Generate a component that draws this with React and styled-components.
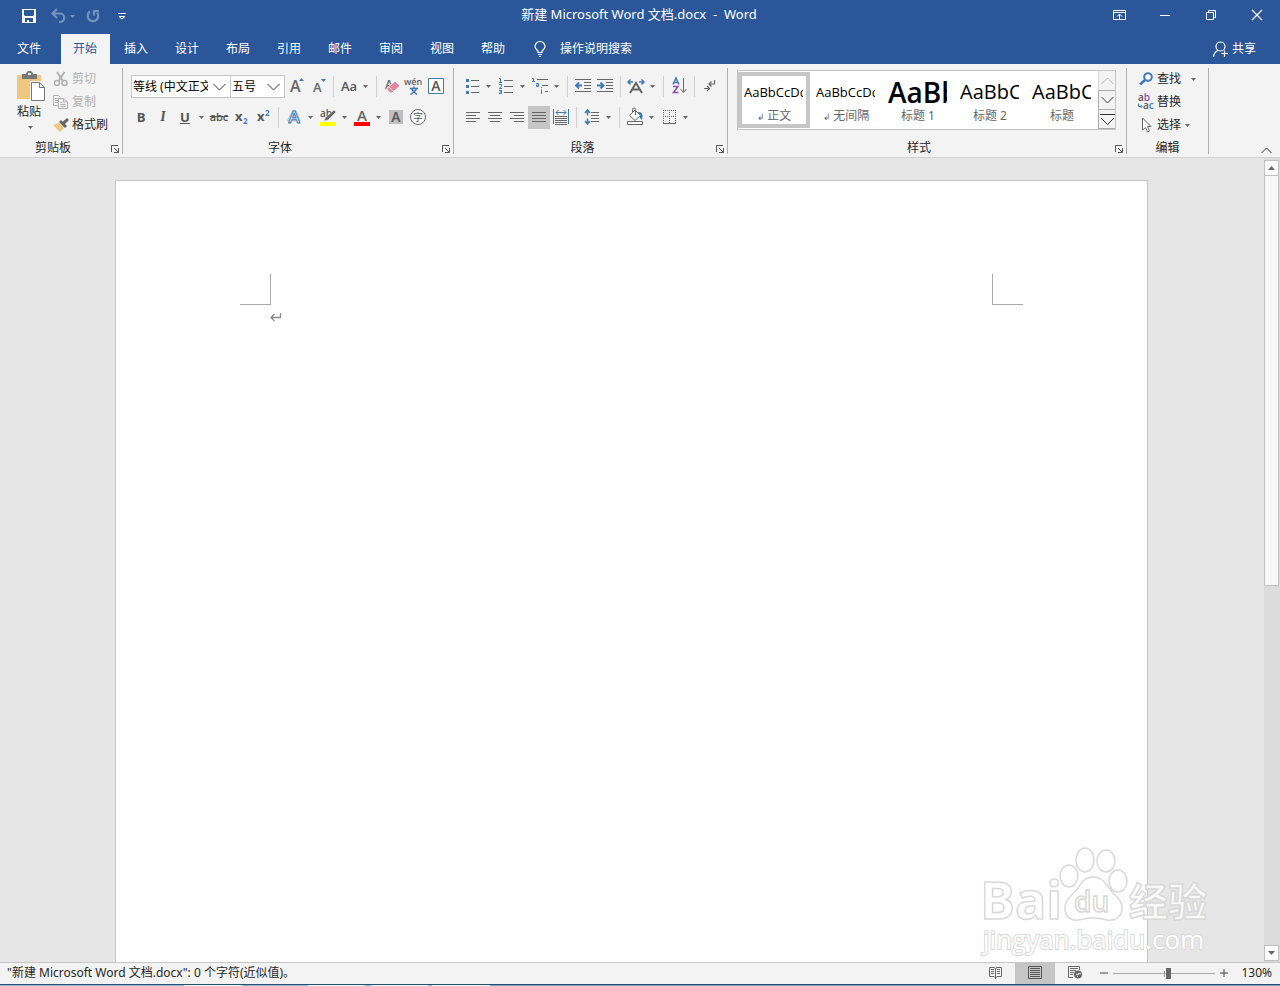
import React, { useState } from 'react';
import styled, { createGlobalStyle, ThemeProvider } from 'styled-components';

const theme = {
  color: {
    primary: '#2b579a',
    ribbon: '#f3f3f3',
    canvas: '#e6e6e6',
    line: '#c6c6c6',
    divider: '#b1b1b1',
    text: '#262626',
    icon: '#666666',
    blue: '#3f7ab5',
    disabled: '#b1b1b1',
  },
};

const GlobalStyle = createGlobalStyle`
  * { box-sizing: border-box; }
  body {
    margin: 0;
    font-family: "Noto Sans", "Noto Sans CJK SC", sans-serif;
    font-size: 12px;
    line-height: 16px;
    color: #262626;
  }
  button, select, input {
    font: inherit;
    color: inherit;
    margin: 0;
  }
  button {
    background: none;
    border: 0;
    padding: 0;
  }
  svg { display: block; flex: none; overflow: visible; }
`;

const Window = styled.div`
  display: flex;
  flex-direction: column;
  height: 100vh;
  overflow: hidden;
`;

/* title bar */
const TitleBar = styled.header(({ theme: { color } }) => `
  display: grid;
  grid-template-columns: 1fr auto 1fr;
  align-items: center;
  height: 34px;
  padding-bottom: 4px;
  background: ${color.primary};
  color: #fff;
`);
const QuickAccess = styled.div`
  display: flex;
  align-items: center;
  padding: 2px 0 0 22px;
`;
const QuickButton = styled.button`
  display: flex;
  align-items: center;
  gap: 4px;
  margin-right: ${({ $gap }) => $gap || 0}px;
  opacity: ${({ disabled }) => (disabled ? 0.35 : 1)};
  color: #fff;
`;
const Title = styled.h1`
  margin: 0;
  padding: 0 2px 2px 0;
  font-size: 13px;
  font-weight: normal;
  white-space: pre;
`;
const WindowButtons = styled.div`
  display: flex;
  justify-content: flex-end;
`;
const WindowButton = styled.button`
  display: grid;
  place-items: center;
  width: 46px;
  height: 30px;
`;

/* tab strip */
const TabStrip = styled.nav(({ theme: { color } }) => `
  display: flex;
  gap: 2px;
  height: 30px;
  background: ${color.primary};
  color: #fff;
`);
const Tab = styled.button`
  width: ${({ $file }) => ($file ? 59 : 49)}px;
  padding-right: 1px;
  ${({ $active, theme: { color } }) => $active && `
    background: ${color.ribbon};
    color: ${color.primary};
  `}
`;
const TellMe = styled.button`
  display: flex;
  align-items: center;
  gap: 14px;
  margin-left: 14px;
`;
const Share = styled.button`
  display: flex;
  align-items: center;
  gap: 4px;
  margin-left: auto;
  padding-right: 24px;
`;

/* ribbon */
const Ribbon = styled.div(({ theme: { color } }) => `
  display: flex;
  height: 94px;
  padding: 4px 0 3px;
  background: ${color.ribbon};
  border-bottom: 1px solid #d2d2d2;
`);
const GroupBox = styled.section(({ theme: { color }, $width }) => `
  display: flex;
  flex-direction: column;
  justify-content: space-between;
  flex: none;
  width: ${$width}px;
  border-right: 1px solid ${color.divider};
`);
const GroupFooter = styled.div`
  display: grid;
  grid-template-columns: ${({ $launcher }) => ($launcher ? '1fr 16px' : '1fr')};
  align-items: center;
  height: 14px;
  text-align: center;
`;
const Launcher = styled.button`
  padding: 2px 0 0 5px;
`;
const Rows = styled.div`
  display: grid;
  gap: 8px;
  padding: 7px 0 0 7px;
`;
const Row = styled.div`
  display: flex;
  align-items: center;
  height: 23px;
  padding-left: ${({ $inset }) => ($inset ? 1 : 0)}px;
`;
const Tool = styled.button(({ theme: { color }, $on }) => `
  display: grid;
  place-items: center;
  flex: none;
  width: 22px;
  height: 23px;
  padding-bottom: 2px;
  color: #555;
  background: ${$on ? color.line : 'transparent'};
`);
const MenuArrow = styled.button`
  width: 12px;
  height: 23px;
  flex: none;
  display: flex;
  align-items: center;
  padding: 0 0 1px 3px;
`;
const Separator = styled.span`
  width: 1px;
  height: 21px;
  margin: 0 4px;
  background: #d0d0d0;
`;
const Clipboard = styled.div`
  display: flex;
  gap: 8px;
  padding: 0 0 0 17px;
`;
const PasteButton = styled.button`
  display: flex;
  flex-direction: column;
  align-items: flex-start;
  gap: 2px;
  padding-top: 3px;
  width: 28px;
`;
const PasteArrow = styled.span`
  padding: 4px 0 0 11px;
`;
const Stack = styled.div`
  display: grid;
  align-content: start;
  justify-items: start;
  gap: 1px;
  padding-left: ${({ $inset }) => $inset || 0}px;
`;
const LabelButton = styled.button`
  display: flex;
  align-items: center;
  gap: 3px;
  height: 22px;
  color: ${({ disabled, theme: { color } }) => (disabled ? color.disabled : color.text)};
`;
const LabelArrow = styled.span`
  padding-left: ${({ $wide }) => ($wide ? 7 : 1)}px;
`;
const Combo = styled.label(({ theme: { color }, $width }) => `
  position: relative;
  flex: none;
  width: ${$width}px;
  height: 23px;
  border: 1px solid ${color.line};
  background: #fff;
  & + & { margin-left: -1px; }
  & > svg {
    position: absolute;
    right: 4px;
    top: 7px;
    pointer-events: none;
  }
`);
const ComboSelect = styled.select`
  appearance: none;
  width: 100%;
  height: 21px;
  padding: 0 22px 0 1px;
  border: 0;
  background: none;
  color: #000;
  text-overflow: clip;
`;
const Letter = styled.span`
  font-size: ${({ $size }) => $size || 13}px;
  font-weight: ${({ $weight }) => $weight || 600};
  font-style: ${({ $italic }) => ($italic ? 'italic' : 'normal')};
  font-family: ${({ $serif }) => ($serif ? '"Liberation Serif", serif' : '"Open Sans", sans-serif')};
  text-decoration: ${({ $line }) => $line || 'none'};
  line-height: 18px;
`;

/* style gallery */
const GalleryRow = styled.div`
  padding: 2px 0 0 9px;
`;
const Gallery = styled.div(({ theme: { color } }) => `
  display: flex;
  width: 379px;
  height: 60px;
  border: 1px solid ${color.line};
  background: #fff;
`);
const StyleItem = styled.button(({ theme: { color }, $selected }) => `
  display: flex;
  flex-direction: column;
  flex: 1;
  min-width: 0;
  height: 56px;
  margin-top: 1px;
  padding: 0 2px;
  border: 4px solid ${$selected ? color.line : 'transparent'};
`);
const Sample = styled.span`
  width: 59px;
  height: 32px;
  overflow: hidden;
  white-space: nowrap;
  text-align: left;
  color: #000;
  font-family: "Open Sans", sans-serif;
  font-size: ${({ $size }) => $size}px;
  font-weight: ${({ $weight }) => $weight};
  line-height: 32px;
`;
const StyleName = styled.span`
  width: 100%;
  text-align: center;
  color: #666;
`;
const StyleMark = styled.span`
  font-size: 9px;
  line-height: 1;
`;
const GalleryScroll = styled.div`
  display: grid;
  grid-template-rows: 20px 19px 19px;
  width: 17px;
`;
const GalleryButton = styled.button(({ $faded }) => `
  display: grid;
  place-items: center;
  background: #f3f3f3;
  border-left: 1px solid ${$faded ? '#d8d8d8' : '#ababab'};
  border-bottom: 1px solid #ababab;
`);
const Collapse = styled.button`
  margin-left: auto;
  align-self: flex-end;
  padding: 0 8px 0 0;
`;

/* document */
const Workspace = styled.main(({ theme: { color } }) => `
  display: flex;
  flex: 1;
  min-height: 0;
  background: ${color.canvas};
`);
const Canvas = styled.div`
  display: flex;
  justify-content: center;
  flex: 1;
  padding: 22px 1px 0 0;
  min-width: 0;
`;
const Page = styled.article(({ theme: { color } }) => `
  width: 1033px;
  max-width: 100%;
  padding: 93px 124px 0;
  background: #fff;
  border: 1px solid ${color.line};
  border-bottom: 0;
`);
const Margins = styled.div`
  display: flex;
  justify-content: space-between;
`;
const Corner = styled.span`
  width: 31px;
  height: 31px;
  border-bottom: 1px solid #ababab;
  border-${({ $side }) => $side}: 1px solid #ababab;
`;
const Paragraph = styled.p`
  margin: 0;
  padding: 8px 30px;
`;
const ScrollBar = styled.div`
  display: flex;
  flex-direction: column;
  width: 16px;
  padding: 2px 1px 1px 0;
  background: #dbdbdb;
`;
const ScrollButton = styled.button`
  display: grid;
  place-items: center;
  height: 16px;
  flex: none;
  background: #fff;
  border: 1px solid #c0c0c0;
`;
const ScrollTrack = styled.div`
  flex: 1;
`;
const ScrollThumb = styled.div`
  height: 53.3%;
  background: #f8f8f8;
  border: 1px solid #c0c0c0;
  border-top: 0;
`;

const Watermark = styled.div`
  position: absolute;
  right: 64px;
  bottom: 26px;
  pointer-events: none;
`;

/* status bar */
const StatusBar = styled.footer(({ theme: { color } }) => `
  display: flex;
  align-items: center;
  height: 22px;
  padding: 0 8px 0 7px;
  background: ${color.ribbon};
  border-top: 1px solid ${color.line};
`);
const StatusText = styled.span`
  flex: 1;
  padding-bottom: 1px;
  white-space: pre;
`;
const ViewButton = styled.button`
  display: grid;
  place-items: center;
  width: 40px;
  height: 21px;
  padding-bottom: 2px;
  background: ${({ $on, theme: { color } }) => ($on ? color.line : 'transparent')};
`;
const ZoomButton = styled.button`
  display: grid;
  place-items: center;
  width: 18px;
  height: 20px;
  padding-bottom: 1px;
`;
const ZoomSlider = styled.input`
  appearance: none;
  width: 102px;
  height: 12px;
  background:
    linear-gradient(#999, #999) center / 1px 6px no-repeat,
    linear-gradient(#ababab, #ababab) center / 100% 1px no-repeat;
  &::-webkit-slider-thumb {
    appearance: none;
    width: 5px;
    height: 11px;
    background: #666;
  }
`;
const ZoomValue = styled.button`
  width: 39px;
  padding-bottom: 1px;
  text-align: right;
`;
const DesktopEdge = styled.div`
  height: 2px;
  flex: none;
  border-top: 1px solid #24506f;
  background: linear-gradient(
    90deg,
    #8fb9d3 184px, #eef5ea 184px 242px, #8fb9d3 242px 308px,
    #eef5ea 308px 365px, #8fb9d3 365px 371px, #eef5ea 371px 428px,
    #8fb9d3 428px 432px, #eef5ea 432px 490px, #7f9fc4 490px
  );
`;

const Svg = ({ w = 16, h = 16, children, ...rest }) => (
  <svg width={w} height={h} viewBox={`0 0 ${w} ${h}`} fill="none" stroke="currentColor" aria-hidden="true" {...rest}>
    {children}
  </svg>
);

const gray = '#666';
const { blue } = theme.color;

const DownArrow = ({ color = gray }) => (
  <Svg w={5} h={3} stroke="none"><path d="M0 0h5L2.5 3z" fill={color} /></Svg>
);
const Chevron = ({ up, color = '#333', w = 13, h = 8 }) => (
  <Svg w={w} h={h} stroke={color}>
    <path d={up ? `M.5 ${h - 1}L${w / 2} 1L${w - 0.5} ${h - 1}` : `M.5 1L${w / 2} ${h - 1}L${w - 0.5} 1`} />
  </Svg>
);

const SaveIcon = () => (
  <Svg w={14} h={14} stroke="none">
    <path fill="#fff" fillRule="evenodd" d="M0 0h14v14H0zM2 1v5l1 1h8l1-1V1zM3 9v4h2v-2h2v2h4V9z" />
  </Svg>
);
const UndoIcon = () => (
  <Svg w={15} h={14}><path d="M6 0L1.500 4.500L6 9M2 4.500h7a4 4 0 0 1 0 8.500H8" strokeWidth="2.200" /></Svg>
);
const RedoIcon = () => (
  <Svg w={14} h={14}><path d="M4 2.500A5.300 5.300 0 1 0 11 3.500M8 6.500V2h5" strokeWidth="2.200" /></Svg>
);
const CustomizeIcon = () => (
  <Svg w={8} h={7} stroke="#fff"><path d="M0 .5h8M1 3.500h6L4 6z" /></Svg>
);
const RibbonOptionsIcon = () => (
  <Svg w={13} h={10} stroke="#fff"><path d="M.5.500h12v9H.500zM0 2.500h13M6.500 9V4.500M4 6.500L6.500 4L9 6.500" /></Svg>
);
const MinimizeIcon = () => <Svg w={10} h={1} stroke="#fff"><path d="M0 .5h10" /></Svg>;
const RestoreIcon = () => (
  <Svg w={10} h={10} stroke="#fff"><path d="M.5 2.500h7v7h-7zM2.500 2V.5h7v7H8" /></Svg>
);
const CloseIcon = () => (
  <Svg w={10} h={10} stroke="#fff"><path d="M0 0L10 10M10 0L0 10" strokeWidth="1.200" /></Svg>
);
const BulbIcon = () => (
  <Svg w={12} h={16} stroke="#fff">
    <path d="M4 11.500V10C3 8.500 1 8 1 5.500a5 5 0 0 1 10 0C11 8 9 8.500 8 10v1.500zM4 13.500h4M5 15.500h2" strokeWidth="1.200" />
  </Svg>
);
const ShareIcon = () => (
  <Svg w={15} h={16} stroke="#fff">
    <path d="M7.500 1a4.500 4.500 0 1 1 0 9a4.500 4.500 0 0 1 0-9zM.5 16C.8 12.500 2.500 10.500 5 9.500M8.500 12.500h6.500M11.500 9.500v6.500" strokeWidth="1.200" />
  </Svg>
);

const PasteIcon = () => (
  <Svg w={28} h={31} stroke="none">
    <path fill="#edc77f" d="M0 4h24v24H0z" />
    <path fill="#777" d="M5 3h4V2l2-2h3l2 2v1h4v5H5z" />
    <path fill="#f3f3f3" d="M11 2h3v2h-3z" />
    <path fill="#fff" stroke="#f3f3f3" strokeWidth="3" d="M14.500 11.500h8l5 5v13h-13z" />
    <path fill="#fff" stroke="#777" d="M14.500 11.500h8l5 5v13h-13z" />
    <path stroke="#777" d="M22.500 11.500v5h5" />
  </Svg>
);
const CutIcon = () => (
  <Svg stroke="#b1b1b1">
    <circle cx="4" cy="12" r="2.500" strokeWidth="1.500" />
    <circle cx="11.500" cy="12" r="2.500" strokeWidth="1.500" />
    <path d="M4 1L10 10M11.500 1L5.500 10" strokeWidth="2" />
  </Svg>
);
const CopyIcon = () => (
  <Svg stroke="#b1b1b1">
    <path d="M5 11.500H.500v-10h5l2 2M2 4.500h3M2 6.500h3M2 8.500h3" />
    <path d="M5.500 4.500h5l4 3.500v6.500h-9zM10.500 4.500v3.500h4M7.500 8.500h2M7.500 10.500h5M7.500 12.500h5" />
  </Svg>
);
const BrushIcon = () => (
  <Svg stroke="none">
    <path fill="#edc77f" d="M0 8l3-1 3-1 5 5-4 4z" />
    <path fill={gray} d="M6 5l2-2 6 6-2 2zM9.500 5L14 1l2 2-4 4z" />
  </Svg>
);
const LauncherIcon = () => (
  <Svg w={8} h={8} stroke="#555"><path d="M.5 7V.5H7M3 3l4 4M7.500 3v4.500H3" /></Svg>
);

const GrowIcon = ({ down }) => (
  <Svg w={18} h={18} stroke="none" fontFamily="Open Sans, sans-serif">
    <text x={down ? 4 : 3} y="15" fontSize={down ? 13 : 16} fontWeight="600" fill={gray}>A</text>
    <path fill={blue} d={down ? 'M12 2h5l-2.500 3z' : 'M12 4h5l-2.500-3z'} />
  </Svg>
);
const EraserIcon = () => (
  <Svg w={16} h={18} stroke="none" fontFamily="Open Sans, sans-serif">
    <text x="1" y="12" fontSize="12" fontWeight="600" fill={gray}>A</text>
    <path fill="#e8889a" stroke="#f3f3f3" d="M3 11l8-7 5 5-8 7H6l-3-3z" />
    <path stroke="#f3f3f3" d="M4.500 9.500l5 5" />
  </Svg>
);
const PinyinIcon = () => (
  <Svg w={18} h={18} stroke={blue}>
    <text x="8" y="8" textAnchor="middle" fontSize="9" fontWeight="500" fill="#555" stroke="none">wén</text>
    <path d="M5 11.500h8M9 9.500v2M6.500 12L9 15l3 2.500M11.500 12L9 15l-3.500 2.500" strokeWidth="1.500" />
  </Svg>
);
const BoxedLetterIcon = () => (
  <Svg w={16} h={16} fontFamily="Open Sans, sans-serif">
    <path stroke={blue} fill="#fff" d="M.5.500h15v15H.500z" />
    <text x="8" y="13" textAnchor="middle" fontSize="14" fontWeight="600" fill="#555" stroke="none">A</text>
  </Svg>
);
const ScriptIcon = ({ sup }) => (
  <Svg w={16} h={16} stroke="none" fontFamily="Open Sans, sans-serif" fontWeight="700">
    <text x="2" y="12" fontSize="13" fill="#555">x</text>
    <text x="10" y={sup ? 7 : 15} fontSize="8" fill={blue}>2</text>
  </Svg>
);
const EffectIcon = () => (
  <Svg w={18} h={18} fontFamily="Open Sans, sans-serif">
    <path stroke="#b7d1ea" strokeWidth="5" strokeLinejoin="round" d="M4 14L9 4l5 10M6 11h6" />
    <text x="9" y="15" textAnchor="middle" fontSize="17" fontWeight="600" fill="#fff" stroke={blue}>A</text>
  </Svg>
);
const HighlightIcon = () => (
  <Svg w={18} h={18} stroke="none" fontFamily="Open Sans, sans-serif">
    <text x="1" y="9" fontSize="10" fontWeight="600" fill="#555">ab</text>
    <path fill={gray} stroke="#f3f3f3" strokeWidth=".5" d="M15 2l2 2-8 8-4 1 1-3z" />
    <path fill="#ff0" d="M1 14h16v4H1z" />
  </Svg>
);
const FontColorIcon = () => (
  <Svg w={18} h={18} stroke="none" fontFamily="Open Sans, sans-serif">
    <text x="9" y="13" textAnchor="middle" fontSize="15" fontWeight="600" fill={gray}>A</text>
    <path fill="#f00" d="M1 14h16v4H1z" />
  </Svg>
);
const ShadingIcon = () => (
  <Svg w={14} h={14} stroke="none" fontFamily="Open Sans, sans-serif">
    <path fill="#c0c0c0" d="M0 0h14v14H0z" />
    <text x="7" y="12" textAnchor="middle" fontSize="14" fontWeight="600" fill="#555">A</text>
  </Svg>
);
const EncloseIcon = () => (
  <Svg w={18} h={18} stroke={gray}>
    <circle cx="9" cy="9" r="7.500" fill="#fff" />
    <text x="9" y="12.500" textAnchor="middle" fontSize="10" fill="#555" stroke="none">字</text>
  </Svg>
);

const BulletsIcon = () => (
  <Svg stroke={gray}>
    <path d="M7 2.500h8M7 8.500h8M7 14.500h8" />
    <path stroke="none" fill={blue} d="M2 1h3v3H2zM2 7h3v3H2zM2 13h3v3H2z" />
  </Svg>
);
const NumbersIcon = () => (
  <Svg h={17} stroke={gray}>
    <path d="M6 3.500h9M6 9.500h9M6 15.500h9" />
    <path stroke={blue} d="M1 1.500h1.500V5M1 5.500h3M1 7.500h2.500V9L1.500 11.500H4M1 13.500h2.500v3H1M1.500 15h2" />
  </Svg>
);
const MultilevelIcon = () => (
  <Svg w={18} h={17} stroke={gray}>
    <path d="M6 2.500h11M11 8.500h6M14 14.500h3" />
    <path stroke={blue} d="M1 1.500h1.500V4M1 4.500h3M5 6.500h2.500v3H5.500v-1.500h2M10.500 10v1M10.500 12.500V17" />
  </Svg>
);
const IndentIcon = ({ out }) => (
  <Svg h={13} stroke={gray}>
    <path d="M0 .5h16M9 3.500h7M9 6.500h7M9 9.500h7M0 12.500h16" />
    <path stroke={blue} strokeWidth="1.800" d={out ? 'M1 6.500h6M4 3.500L1 6.500L4 9.500' : 'M0 6.500h6M3.500 3.500L6.500 6.500L3.500 9.500'} />
  </Svg>
);
const AsianLayoutIcon = () => (
  <Svg w={18} h={16} stroke={blue} strokeWidth="1.500">
    <path d="M1 4h5M3.500 1.500L1 4l2.500 2.500M17 4h-5M14.500 1.500L17 4l-2.500 2.500" />
    <path stroke={gray} strokeWidth="2" d="M3 15L9 5l6 10M5.500 11.500h7" />
  </Svg>
);
const SortIcon = () => (
  <Svg w={15} h={17} stroke={gray}>
    <path stroke={blue} strokeWidth="1.500" d="M1 7.500L4 1l3 6.500M2 5.500h4" />
    <path stroke="#8e4bb0" strokeWidth="1.500" d="M1 9.500h5L1.500 15.500h5" />
    <path d="M11.500 1v14M8.500 12l3 3.500 3-3.500" />
  </Svg>
);
const MarksIcon = () => (
  <Svg w={12} h={13} stroke={gray}>
    <path strokeWidth="1.200" d="M10.500 1v4h-5M7.500 2.500L5 5l2.500 2.500M0 9.500h5M3 7l2.500 2.500L3 12" />
  </Svg>
);
const alignPaths = {
  左对齐: 'M0 .5h14M0 3.500h10M0 6.500h14M0 9.500h10',
  居中: 'M0 .5h14M2 3.500h10M0 6.500h14M2 9.500h10',
  右对齐: 'M0 .5h14M4 3.500h10M0 6.500h14M4 9.500h10',
  两端对齐: 'M0 .5h14M0 3.500h14M0 6.500h14M0 9.500h14',
};
const DistributeIcon = () => (
  <Svg h={16} stroke={gray}>
    <path d="M2 7.500h12M2 9.500h12M2 11.500h12M2 13.500h12M2 15.500h12" />
    <path stroke={blue} d="M.5 0v15M15.500 0v15M3 3.500h10M5.500 1L3 3.500L5.500 6M10.500 1L13 3.500L10.500 6" />
  </Svg>
);
const SpacingIcon = () => (
  <Svg w={14} h={16} stroke={gray}>
    <path d="M6 3.500h8M6 6.500h8M6 9.500h8M6 12.500h8" />
    <path stroke={blue} strokeWidth="1.500" d="M2.500 1v5.500M2.500 9.500V15M0 4l2.500-3L5 4M0 12l2.500 3L5 12" />
  </Svg>
);
const FillIcon = () => (
  <Svg w={17} h={17} stroke={gray}>
    <path fill="#fff" d="M2.500 7.500L8 2l5.500 5.500L8 12.500z" />
    <path d="M5.500 5V1.500a1.500 1.500 0 0 1 3 0V7" />
    <path fill={blue} stroke="none" d="M11 4c4 0 5.500 2 4 8l-2-2V7z" />
    <path fill="#fff" d="M.5 13.500h15v3H.500z" />
  </Svg>
);
const BorderIcon = () => (
  <Svg w={13} h={14} stroke={gray}>
    <path strokeDasharray="1 1" d="M0 .5h13M0 6.500h13M.5 0v13M6.500 0v13M12.500 0v13" />
    <path d="M0 13.500h13" />
  </Svg>
);
const FindIcon = () => (
  <Svg w={15} h={14} stroke={blue}>
    <circle cx="9" cy="5" r="3.800" strokeWidth="2" fill="#fff" />
    <path d="M6 8L1 12.500" strokeWidth="2.500" />
  </Svg>
);
const ReplaceIcon = () => (
  <Svg w={15} h={16} stroke="none" fontFamily="Open Sans, sans-serif" fontSize="10" fontWeight="600">
    <text x="-1" y="7" fill="#555">
      a
      <tspan fill="#8e4bb0">b</tspan>
    </text>
    <text x="4" y="15" fill="#555">
      a
      <tspan fill={blue}>c</tspan>
    </text>
    <path stroke={blue} d="M-.5 9.500v3h3M1.500 11L3 12.500L1.500 14" />
  </Svg>
);
const SelectIcon = () => (
  <Svg w={15} h={16} stroke={gray}>
    <path fill="#fff" d="M3.500 1v12l3-2.500 2 4.500 2-1-2-4.500h3.500z" />
  </Svg>
);
const ReturnIcon = () => (
  <Svg w={12} h={9} stroke="#8a8a8a"><path strokeWidth="1.300" d="M10.500 0v4.500H1M4.500 1L1 4.500L4.500 8" /></Svg>
);

const ReadIcon = () => (
  <Svg w={13} h={13} stroke={gray}>
    <path d="M6.500 2.500L5 1.500H.500v9H5l1.500 1.500L8 10.500h4.500v-9H8zM6.500 2v11M2 3.500h3M2 5.500h3M2 7.500h3M8 3.500h3M8 5.500h3M8 7.500h3" />
  </Svg>
);
const PrintIcon = () => (
  <Svg w={14} h={13} stroke="#555"><path d="M.5.500h13v12H.500zM2 2.500h10M2 4.500h10M2 6.500h10M2 8.500h10M2 10.500h10" /></Svg>
);
const WebIcon = () => (
  <Svg w={15} h={13} stroke={gray}>
    <path d="M5 11.500H.500v-11h11V4M2 2.500h8M2 4.500h6M2 6.500h4M2 8.500h3" />
    <circle cx="10" cy="8.500" r="4" fill={gray} stroke="none" />
    <path stroke="#f3f3f3" d="M8 8l2 1 1-2 2 1M9 11l1-1" />
  </Svg>
);

const Group = ({ title, width, launcher = true, children }) => (
  <GroupBox $width={width} aria-label={title}>
    {children}
    <GroupFooter $launcher={launcher}>
      <span>{title}</span>
      {launcher && <Launcher aria-label={`${title}设置`}><LauncherIcon /></Launcher>}
    </GroupFooter>
  </GroupBox>
);

const Menu = ({ label }) => <MenuArrow aria-label={label}><DownArrow /></MenuArrow>;

const tabs = ['文件', '开始', '插入', '设计', '布局', '引用', '邮件', '审阅', '视图', '帮助'];

const styleItems = [
  { name: '正文', size: 13, weight: 400, mark: true },
  { name: '无间隔', size: 13, weight: 400, mark: true },
  { name: '标题 1', size: 28, weight: 600 },
  { name: '标题 2', size: 20, weight: 400 },
  { name: '标题', size: 20, weight: 400 },
];

const BaiduMark = () => (
  <Watermark>
    <svg
      width="236"
      height="116"
      viewBox="0 0 236 116"
      fill="#fff"
      fillOpacity=".8"
      stroke="#d9d9d9"
      strokeWidth="1.500"
      fontFamily="Open Sans, Noto Sans CJK SC, sans-serif"
      aria-hidden="true"
    >
      <text x="0" y="75" fontSize="52" fontWeight="700">Bai</text>
      <ellipse cx="89" cy="32" rx="9" ry="11" />
      <ellipse cx="105" cy="16" rx="9" ry="12" />
      <ellipse cx="126" cy="17" rx="9" ry="11" />
      <ellipse cx="138" cy="37" rx="9" ry="11" />
      <path d="M113 33c8 0 12 5 16 11c5 7 13 11 13 20c0 9-7 13-14 12c-6-1-9-2-15-2s-9 1-15 2c-8 1-13-4-13-12c0-9 8-13 13-20c4-6 7-11 15-11z" />
      <text x="94" y="68" fontSize="28" fontWeight="600">du</text>
      <text x="149" y="72" fontSize="39" fontWeight="700">经验</text>
      <text x="3" y="105" fontSize="26" fontWeight="500" strokeWidth="2" paintOrder="stroke" fillOpacity="1">jingyan.baidu.com</text>
    </svg>
  </Watermark>
);

const App = () => {
  const [activeTab, setActiveTab] = useState('开始');
  const [activeStyle, setActiveStyle] = useState('正文');
  const [align, setAlign] = useState('两端对齐');
  const [zoom, setZoom] = useState(55);

  return (
    <ThemeProvider theme={theme}>
      <GlobalStyle />
      <Window>
        <TitleBar>
          <QuickAccess>
            <QuickButton $gap={15} aria-label="保存"><SaveIcon /></QuickButton>
            <QuickButton $gap={11} aria-label="撤消" disabled>
              <UndoIcon />
              <DownArrow color="#fff" />
            </QuickButton>
            <QuickButton $gap={18} aria-label="恢复" disabled><RedoIcon /></QuickButton>
            <QuickButton aria-label="自定义快速访问工具栏"><CustomizeIcon /></QuickButton>
          </QuickAccess>
          <Title>{'新建 Microsoft Word 文档.docx  -  Word'}</Title>
          <WindowButtons>
            <WindowButton aria-label="功能区显示选项"><RibbonOptionsIcon /></WindowButton>
            <WindowButton aria-label="最小化"><MinimizeIcon /></WindowButton>
            <WindowButton aria-label="向下还原"><RestoreIcon /></WindowButton>
            <WindowButton aria-label="关闭"><CloseIcon /></WindowButton>
          </WindowButtons>
        </TitleBar>

        <TabStrip>
          {tabs.map((tab, i) => (
            <Tab key={tab} $file={i === 0} $active={tab === activeTab} onClick={() => setActiveTab(tab)}>
              {tab}
            </Tab>
          ))}
          <TellMe>
            <BulbIcon />
            操作说明搜索
          </TellMe>
          <Share>
            <ShareIcon />
            共享
          </Share>
        </TabStrip>

        <Ribbon>
          <Group title="剪贴板" width={123}>
            <Clipboard>
              <PasteButton>
                <PasteIcon />
                粘贴
                <PasteArrow><DownArrow /></PasteArrow>
              </PasteButton>
              <Stack>
                <LabelButton disabled>
                  <CutIcon />
                  剪切
                </LabelButton>
                <LabelButton disabled>
                  <CopyIcon />
                  复制
                </LabelButton>
                <LabelButton>
                  <BrushIcon />
                  格式刷
                </LabelButton>
              </Stack>
            </Clipboard>
          </Group>

          <Group title="字体" width={331}>
            <Rows>
              <Row $inset>
                <Combo $width={100}>
                  <ComboSelect aria-label="字体">
                    <option>等线 (中文正文)</option>
                    <option>宋体</option>
                  </ComboSelect>
                  <Chevron />
                </Combo>
                <Combo $width={55}>
                  <ComboSelect aria-label="字号">
                    <option>五号</option>
                    <option>四号</option>
                  </ComboSelect>
                  <Chevron />
                </Combo>
                <Tool aria-label="增大字号"><GrowIcon /></Tool>
                <Tool aria-label="减小字号"><GrowIcon down /></Tool>
                <Separator />
                <Tool><Letter>Aa</Letter></Tool>
                <Menu label="更改大小写" />
                <Separator />
                <Tool aria-label="清除格式"><EraserIcon /></Tool>
                <Tool aria-label="拼音指南"><PinyinIcon /></Tool>
                <Tool aria-label="字符边框"><BoxedLetterIcon /></Tool>
              </Row>
              <Row>
                <Tool><Letter $weight={700}>B</Letter></Tool>
                <Tool><Letter $weight={700} $size={14} $italic $serif>I</Letter></Tool>
                <Tool><Letter $weight={700} $line="underline">U</Letter></Tool>
                <Menu label="下划线" />
                <Tool><Letter $size={11} $line="line-through">abc</Letter></Tool>
                <Tool aria-label="下标"><ScriptIcon /></Tool>
                <Tool aria-label="上标"><ScriptIcon sup /></Tool>
                <Separator />
                <Tool aria-label="文本效果"><EffectIcon /></Tool>
                <Menu label="更多文本效果" />
                <Tool aria-label="突出显示"><HighlightIcon /></Tool>
                <Menu label="突出显示颜色" />
                <Tool aria-label="字体颜色"><FontColorIcon /></Tool>
                <Menu label="更多字体颜色" />
                <Tool aria-label="字符底纹"><ShadingIcon /></Tool>
                <Tool aria-label="带圈字符"><EncloseIcon /></Tool>
              </Row>
            </Rows>
          </Group>

          <Group title="段落" width={274}>
            <Rows>
              <Row>
                <Tool aria-label="项目符号"><BulletsIcon /></Tool>
                <Menu label="项目符号库" />
                <Tool aria-label="编号"><NumbersIcon /></Tool>
                <Menu label="编号库" />
                <Tool aria-label="多级列表"><MultilevelIcon /></Tool>
                <Menu label="多级列表库" />
                <Separator />
                <Tool aria-label="减少缩进量"><IndentIcon out /></Tool>
                <Tool aria-label="增加缩进量"><IndentIcon /></Tool>
                <Separator />
                <Tool aria-label="中文版式"><AsianLayoutIcon /></Tool>
                <Menu label="更多中文版式" />
                <Separator />
                <Tool aria-label="排序"><SortIcon /></Tool>
                <Separator />
                <Tool aria-label="显示编辑标记"><MarksIcon /></Tool>
              </Row>
              <Row $inset>
                {Object.keys(alignPaths).map((key) => (
                  <Tool key={key} aria-label={key} $on={key === align} onClick={() => setAlign(key)}>
                    <Svg w={14} h={10} stroke={gray}><path d={alignPaths[key]} /></Svg>
                  </Tool>
                ))}
                <Tool aria-label="分散对齐"><DistributeIcon /></Tool>
                <Separator />
                <Tool aria-label="行和段落间距"><SpacingIcon /></Tool>
                <Menu label="间距选项" />
                <Separator />
                <Tool aria-label="底纹"><FillIcon /></Tool>
                <Menu label="底纹颜色" />
                <Tool aria-label="边框"><BorderIcon /></Tool>
                <Menu label="边框选项" />
              </Row>
            </Rows>
          </Group>

          <Group title="样式" width={399}>
            <GalleryRow>
              <Gallery>
                {styleItems.map(({ name, size, weight, mark }) => (
                  <StyleItem key={name} $selected={name === activeStyle} onClick={() => setActiveStyle(name)}>
                    <Sample $size={size} $weight={weight}>AaBbCcDd</Sample>
                    <StyleName>
                      {mark && <StyleMark>↲ </StyleMark>}
                      {name}
                    </StyleName>
                  </StyleItem>
                ))}
                <GalleryScroll>
                  <GalleryButton $faded aria-label="上一行"><Chevron up color="#bbb" /></GalleryButton>
                  <GalleryButton aria-label="下一行"><Chevron /></GalleryButton>
                  <GalleryButton aria-label="其他样式">
                    <Svg w={15} h={13} stroke="#333"><path d="M0 1.500h15M1 5L7.500 11.500L14 5" /></Svg>
                  </GalleryButton>
                </GalleryScroll>
              </Gallery>
            </GalleryRow>
          </Group>

          <Group title="编辑" width={82} launcher={false}>
            <Stack $inset={12}>
              <LabelButton>
                <FindIcon />
                查找
                <LabelArrow $wide><DownArrow /></LabelArrow>
              </LabelButton>
              <LabelButton>
                <ReplaceIcon />
                替换
              </LabelButton>
              <LabelButton>
                <SelectIcon />
                选择
                <LabelArrow><DownArrow /></LabelArrow>
              </LabelButton>
            </Stack>
          </Group>
          <Collapse aria-label="折叠功能区"><Chevron up w={11} h={7} /></Collapse>
        </Ribbon>

        <Workspace>
          <Canvas>
            <Page>
              <Margins>
                <Corner $side="right" />
                <Corner $side="left" />
              </Margins>
              <Paragraph><ReturnIcon /></Paragraph>
            </Page>
          </Canvas>
          <ScrollBar>
            <ScrollButton aria-label="向上滚动">
              <Svg w={7} h={4} stroke="none"><path fill={gray} d="M0 4h7L3.500 0z" /></Svg>
            </ScrollButton>
            <ScrollTrack><ScrollThumb /></ScrollTrack>
            <ScrollButton aria-label="向下滚动">
              <Svg w={7} h={4} stroke="none"><path fill={gray} d="M0 0h7L3.500 4z" /></Svg>
            </ScrollButton>
          </ScrollBar>
        </Workspace>

        <StatusBar>
          <StatusText>{'"新建 Microsoft Word 文档.docx": 0 个字符(近似值)。'}</StatusText>
          <ViewButton aria-label="阅读视图"><ReadIcon /></ViewButton>
          <ViewButton $on aria-label="页面视图"><PrintIcon /></ViewButton>
          <ViewButton aria-label="Web 版式视图"><WebIcon /></ViewButton>
          <ZoomButton aria-label="缩小"><Svg w={8} h={2} stroke="#444"><path d="M0 1h8" /></Svg></ZoomButton>
          <ZoomSlider
            type="range"
            aria-label="显示比例"
            value={zoom}
            onChange={(e) => setZoom(Number(e.target.value))}
          />
          <ZoomButton aria-label="放大"><Svg w={8} h={8} stroke="#444"><path d="M0 4h8M4 0v8" /></Svg></ZoomButton>
          <ZoomValue>130%</ZoomValue>
        </StatusBar>
        <DesktopEdge />
        <BaiduMark />
      </Window>
    </ThemeProvider>
  );
};

export default App;
